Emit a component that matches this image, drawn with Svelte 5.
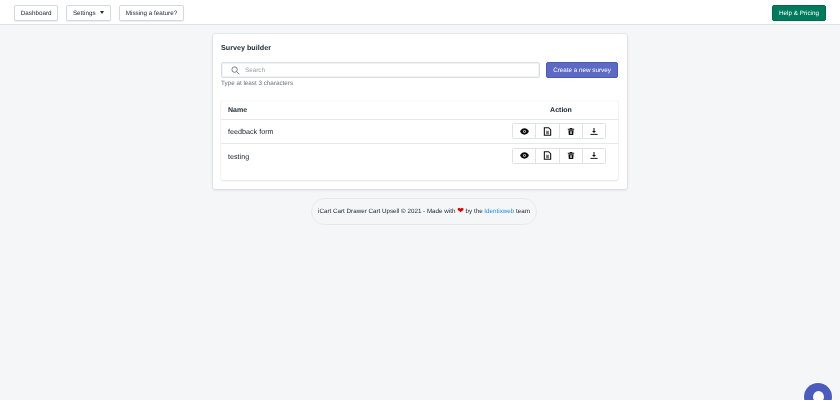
<script>
	const surveys = ['feedback form', 'testing'];
</script>

<div class="page">
	<div class="topbar">
		<div class="nav">
			<button class="btn">Dashboard</button>
			<button class="btn">Settings <span class="caret"></span></button>
			<button class="btn">Missing a feature?</button>
		</div>
		<button class="btn help">Help &amp; Pricing</button>
	</div>

	<main>
		<section class="card">
			<h2>Survey builder</h2>
			<div class="search-row">
				<div class="search">
					<svg viewBox="0 0 20 20" width="9" height="9" fill="none" stroke="#637381" stroke-width="2">
						<circle cx="8" cy="8" r="6" />
						<path d="M12.5 12.5 L18.5 18.5" />
					</svg>
					<span>Search</span>
				</div>
				<button class="create">Create a new survey</button>
			</div>
			<p class="hint">Type at least 3 characters</p>

			<div class="table">
				<div class="row head">
					<div class="name">Name</div>
					<div class="action">Action</div>
				</div>
				{#each surveys as survey}
					<div class="row">
						<div class="name">{survey}</div>
						<div class="group">
							<button aria-label="View">
								<svg viewBox="0 0 20 20" width="9" height="9" fill="#111">
									<path fill-rule="evenodd" d="M10 3C5.200 3 1.600 6.700 .2 10c1.400 3.300 5 7 9.800 7s8.400-3.700 9.800-7C18.400 6.700 14.800 3 10 3zM10 7a3 3 0 1 1 0 6 3 3 0 0 1 0-6z" />
									<circle cx="10" cy="10" r="1.500" />
								</svg>
							</button>
							<button aria-label="Report">
								<svg viewBox="0 0 20 20" width="9" height="11" fill="none" stroke="#111" stroke-width="2.400">
									<path d="M3 1.500h9.500l4.500 4.500v12.500H3z" />
									<path d="M7 9.500h6M7 12.500h6M7 15h6" stroke-width="1.600" />
								</svg>
							</button>
							<button aria-label="Delete">
								<svg viewBox="0 0 20 20" width="8" height="9" fill="#111">
									<path d="M7 1h6v2h5v2.500H2V3h5z" />
									<path fill-rule="evenodd" d="M3.500 7h13l-1 12h-11zM7.500 9.500v7h1.500v-7zM11 9.500v7h1.500v-7z" />
								</svg>
							</button>
							<button aria-label="Download">
								<svg viewBox="0 0 20 20" width="8" height="9" fill="#111">
									<path d="M8.700 1h2.600v7.500H15L10 14 5 8.500h3.700z" />
									<rect x="1" y="16" width="18" height="2.400" />
								</svg>
							</button>
						</div>
					</div>
				{/each}
			</div>
		</section>

		<footer>
			iCart Cart Drawer Cart Upsell © 2021 - Made with <span class="heart">❤</span> by the <span class="link">Identixweb</span> team
		</footer>
	</main>
</div>

<div class="chat"><span class="dot"></span></div>

<style>
	:global(body) {
		margin: 0;
		background: #f4f6f8;
		font-family: 'Liberation Sans', Arial, sans-serif;
		text-rendering: geometricPrecision;
		overflow: hidden;
	}

	/* reference is a downscaled capture, text is slightly soft */
	.page {
		filter: blur(0.3px);
	}

	.topbar {
		height: 25px;
		box-sizing: border-box;
		background: #fff;
		border-bottom: 1px solid #dfe3e8;
		display: flex;
		justify-content: space-between;
		align-items: flex-start;
		padding: 5px 14px 0;
	}

	.nav {
		display: flex;
		gap: 8px;
	}

	.btn {
		height: 16px;
		padding: 0 5.700px;
		background: #fff;
		border: 1px solid #d3d9df;
		border-radius: 2px;
		box-shadow: 0 1px 1px rgba(22, 29, 37, 0.08);
		font: 6.300px 'Liberation Sans', Arial, sans-serif;
		text-rendering: geometricPrecision;
		color: #212b36;
		white-space: nowrap;
	}

	.caret {
		display: inline-block;
		margin-left: 3px;
		vertical-align: middle;
		border: 2.500px solid transparent;
		border-top: 3px solid #212b36;
		border-bottom: 0;
	}

	.help {
		width: 54px;
		padding: 0;
		background: #007a5c;
		border-color: #006b50;
		color: #fff;
	}

	main {
		display: flex;
		flex-direction: column;
		align-items: center;
		padding-top: 9px;
	}

	.card {
		width: 414px;
		height: 155px;
		box-sizing: border-box;
		padding: 8px 9px 0 8px;
		background: #fff;
		border-radius: 2px;
		box-shadow: 0 0 0 1px rgba(63, 63, 68, 0.05), 0 1px 3px rgba(63, 63, 68, 0.15);
	}

	h2 {
		margin: 0;
		font-size: 7.200px;
		line-height: 11px;
		font-weight: 700;
		color: #212b36;
	}

	.search-row {
		display: flex;
		gap: 6px;
		margin-top: 9px;
	}

	.search {
		width: 319px;
		height: 16px;
		box-sizing: border-box;
		display: flex;
		align-items: center;
		gap: 5px;
		padding-left: 9px;
		border: 1px solid #d9dee3;
		border-radius: 2px;
		box-shadow: inset 0 0 0 1px #f0f2f4;
		font-size: 6.300px;
		color: #919eab;
	}

	.create {
		width: 72px;
		height: 16px;
		padding: 0;
		background: #5c6ac4;
		border: 1px solid #4a5ab8;
		border-radius: 2px;
		color: #fff;
		font: 6.300px 'Liberation Sans', Arial, sans-serif;
		text-rendering: geometricPrecision;
	}

	.hint {
		margin: 1px 0 0;
		font-size: 6.300px;
		line-height: 10px;
		color: #637381;
	}

	.table {
		margin-top: 12px;
		height: 79px;
		box-sizing: border-box;
		border-radius: 2px;
		box-shadow: 0 0 0 1px rgba(63, 63, 68, 0.03), 0 1px 2px rgba(63, 63, 68, 0.12);
	}

	.row {
		height: 24px;
		box-sizing: border-box;
		display: flex;
		align-items: center;
		justify-content: space-between;
		padding: 0 12px 1px 7px;
		border-bottom: 1px solid #e6e9ec;
		font-size: 7.200px;
		color: #212b36;
	}

	.row:last-child {
		border-bottom: 0;
	}

	.head {
		height: 19px;
		padding-bottom: 0;
		font-weight: 700;
		font-size: 7px;
	}

	.name {
		padding-top: 1px;
	}

	.action {
		width: 94px;
		padding: 1px 0 0 4px;
		box-sizing: border-box;
		text-align: center;
	}

	.group {
		display: flex;
		width: 94px;
		height: 16px;
		box-sizing: border-box;
		border: 1px solid #dfe3e8;
		border-radius: 2px;
	}

	.group button {
		flex: 1;
		display: flex;
		align-items: center;
		justify-content: center;
		padding: 0;
		background: #fff;
		border: 0;
		border-right: 1px solid #dfe3e8;
	}

	.group button:last-child {
		border-right: 0;
	}

	footer {
		margin: 9px 0 0 8px;
		width: 226px;
		height: 27px;
		box-sizing: border-box;
		border: 1px solid #e6e9ec;
		border-radius: 14px;
		font-size: 6.250px;
		line-height: 25px;
		text-align: center;
		color: #212b36;
		white-space: nowrap;
	}

	.heart {
		color: #e60000;
		font-size: 8px;
		line-height: 1;
	}

	.link {
		color: #1f8ddb;
	}

	.chat {
		position: fixed;
		left: 804px;
		top: 383px;
		width: 28px;
		height: 28px;
		border-radius: 50%;
		background: #4a5cc0;
		box-shadow: 0 0 0 1px #fff;
	}

	.dot {
		position: absolute;
		left: 9px;
		top: 8px;
		width: 11px;
		height: 12px;
		border-radius: 50%;
		background: #fff;
	}
</style>
